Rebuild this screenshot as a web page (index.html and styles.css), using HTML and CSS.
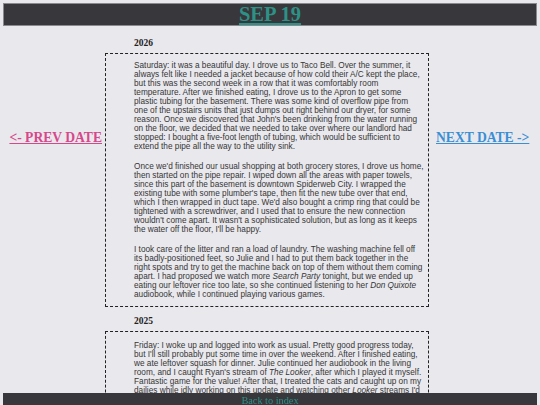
FILE: index.html
```html
<!DOCTYPE html>
<html lang="en">
<head>
<meta charset="utf-8">
<title>SEP 19</title>
<link rel="stylesheet" href="styles.css">
</head>
<body>
<header class="topbar">
  <a class="day-title" href="#">SEP 19</a>
</header>

<div class="layout">
  <nav class="side side-prev">
    <a class="nav-link prev" href="#">&lt;- PREV DATE</a>
  </nav>

  <main class="entries">
    <section class="entry">
      <h2 class="year">2026</h2>
      <div class="entry-box">
        <p>Saturday: it was a beautiful day. I drove us to Taco Bell. Over the summer, it always felt like I needed a jacket because of how cold their A/C kept the place, but this was the second week in a row that it was comfortably room temperature. After we finished eating, I drove us to the Apron to get some plastic tubing for the basement. There was some kind of overflow pipe from one of the upstairs units that just dumps out right behind our dryer, for some reason. Once we discovered that John's been drinking from the water running on the floor, we decided that we needed to take over where our landlord had stopped: I bought a five-foot length of tubing, which would be sufficient to extend the pipe all the way to the utility sink.</p>
        <p>Once we'd finished our usual shopping at both grocery stores, I drove us home, then started on the pipe repair. I wiped down all the areas with paper towels, since this part of the basement is downtown Spiderweb City. I wrapped the existing tube with some plumber's tape, then fit the new tube over that end, which I then wrapped in duct tape. We'd also bought a crimp ring that could be tightened with a screwdriver, and I used that to ensure the new connection wouldn't come apart. It wasn't a sophisticated solution, but as long as it keeps the water off the floor, I'll be happy.</p>
        <p>I took care of the litter and ran a load of laundry. The washing machine fell off its badly-positioned feet, so Julie and I had to put them back together in the right spots and try to get the machine back on top of them without them coming apart. I had proposed we watch more <em>Search Party</em> tonight, but we ended up eating our leftover rice too late, so she continued listening to her <em>Don Quixote</em> audiobook, while I continued playing various games.</p>
      </div>
    </section>

    <section class="entry">
      <h2 class="year">2025</h2>
      <div class="entry-box">
        <p>Friday: I woke up and logged into work as usual. Pretty good progress today, but I'll still probably put some time in over the weekend. After I finished eating, we ate leftover squash for dinner. Julie continued her audiobook in the living room, and I caught Ryan's stream of <em>The Looker</em>, after which I played it myself. Fantastic game for the value! After that, I treated the cats and caught up on my dailies while idly working on this update and watching other <em>Looker</em> streams I'd missed earlier in the week.</p>
      </div>
    </section>
  </main>

  <nav class="side side-next">
    <a class="nav-link next" href="#">NEXT DATE -&gt;</a>
  </nav>
</div>

<footer class="bottombar">
  <a class="back-link" href="#">Back to index</a>
</footer>
</body>
</html>
```

FILE: styles.css
```css
html, body {
  margin: 0;
  padding: 0;
}

body {
  background: #e9e8ed;
  color: #333;
  font-family: "Liberation Serif", "Times New Roman", serif;
  padding: 3px 3px 40px;
}

/* top title bar */
.topbar {
  background: #38373b;
  border: 1px solid #8a8a8e;
  height: 21px;
  display: flex;
  align-items: center;
  justify-content: center;
}

.day-title {
  color: #2d9187;
  font-weight: bold;
  font-size: 20.5px;
  line-height: 21px;
  text-decoration: underline;
  text-decoration-thickness: 2px;
  text-underline-offset: 2px;
}

/* three-column layout: prev link, entries, next link */
.layout {
  display: flex;
  align-items: flex-start;
}

.side {
  flex: 0 0 auto;
  padding-top: 102px;
}

.side-prev {
  width: 99px;
  padding-right: 3px;
  text-align: right;
}

.side-next {
  width: 98px;
  padding-left: 7px;
}

.nav-link {
  font-weight: bold;
  font-size: 13.6px;
  text-decoration: underline;
}

.prev { color: #d6488b; }
.next { color: #3a8fd4; }

.entries {
  flex: 0 0 324px;
}

.year {
  font-size: 9.5px;
  font-weight: bold;
  color: #222;
  margin: 12px 0 4px 29px;
  line-height: 11px;
}

.entry-box {
  border: 1px dashed #222;
  padding: 7px 4px 7px 28px;
  font-family: "Liberation Sans", Arial, sans-serif;
  font-size: 8.25px;
  line-height: 9px;
  color: #363636;
}

.entry-box p {
  margin: 0 0 11px;
}

.entry-box p:last-child {
  margin-bottom: 0;
}

.entry + .entry .year {
  margin-top: 9px;
}

.entry + .entry .entry-box {
  padding-top: 9px;
}

/* bottom bar with index link */
.bottombar {
  position: fixed;
  left: 3px;
  right: 3px;
  bottom: 0;
  height: 12px;
  background: #38373b;
  text-align: center;
  line-height: 12px;
}

.back-link {
  color: #2d9187;
  font-size: 10.3px;
  text-decoration: underline;
}
```
